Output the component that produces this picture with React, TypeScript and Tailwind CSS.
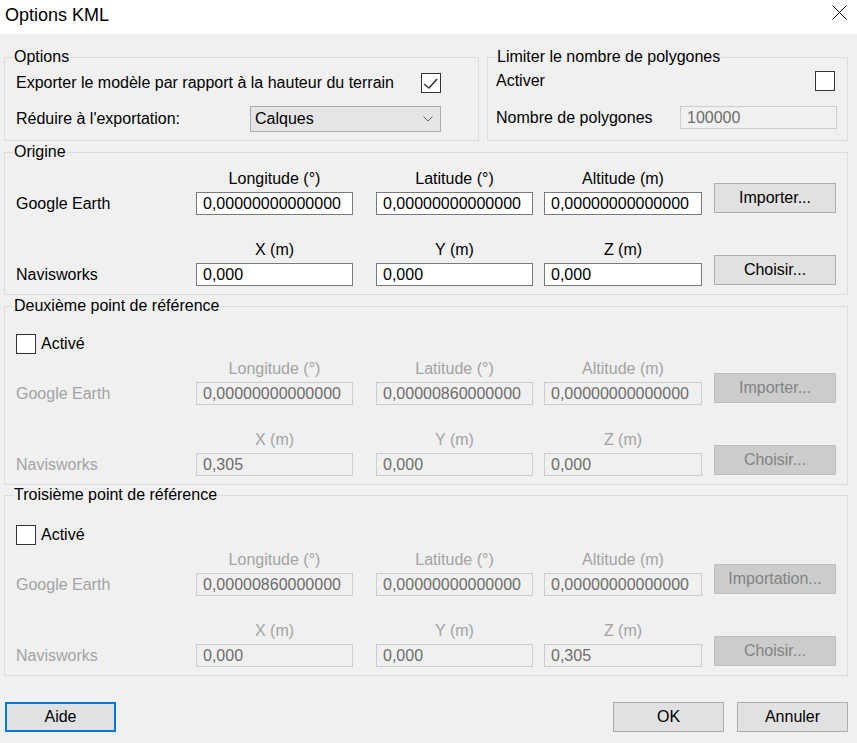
import React from 'react';

type Coord = {
  google: string[];
  navis: string[];
  importLabel: string;
};

const GOOGLE_HEADERS = ['Longitude (°)', 'Latitude (°)', 'Altitude (m)'];
const NAVIS_HEADERS = ['X (m)', 'Y (m)', 'Z (m)'];
const FIELD_LAYOUT = [
  { w: 'w-[157px]', ml: '' },
  { w: 'w-[157px]', ml: 'ml-[23px]' },
  { w: 'w-[158px]', ml: 'ml-[11px]' },
];

function Checkbox({ checked = false }: { checked?: boolean }) {
  return (
    <span className="w-[20px] h-[20px] border border-[#333333] bg-white flex items-center justify-center shrink-0">
      {checked && (
        <svg width="18" height="18" viewBox="0 0 18 18">
          <polyline points="2,10 7,14 15,5" fill="none" stroke="#333333" strokeWidth="1.6" />
        </svg>
      )}
    </span>
  );
}

function Group({ title, className, children }: { title: string; className: string; children: React.ReactNode }) {
  return (
    <fieldset className={`border border-[#dcdcdc] min-w-0 ${className}`}>
      <legend className="ml-[8px] px-[1px] leading-[20px]">{title}</legend>
      {children}
    </fieldset>
  );
}

function Button({ label, disabled, className }: { label: string; disabled?: boolean; className: string }) {
  return (
    <div
      className={`w-[122px] h-[30px] border flex items-center justify-center ${
        disabled ? 'bg-[#cccccc] border-[#bfbfbf] text-[#838383]' : 'bg-[#e1e1e1] border-[#adadad] text-black'
      } ${className}`}
    >
      {label}
    </div>
  );
}

function CoordRow({
  label,
  headers,
  values,
  button,
  buttonMb,
  disabled,
}: {
  label: string;
  headers: string[];
  values: string[];
  button: string;
  buttonMb: string;
  disabled?: boolean;
}) {
  return (
    <div className="flex items-end">
      <div className={`w-[180px] h-[23px] flex items-center ${disabled ? 'text-[#a3a3a3]' : 'text-black'}`}>{label}</div>
      {FIELD_LAYOUT.map((f, i) => (
        <div key={i} className={`flex flex-col ${f.w} ${f.ml}`}>
          <div className={`h-[20px] leading-[20px] text-center whitespace-nowrap ${disabled ? 'text-[#a3a3a3]' : 'text-black'}`}>
            {headers[i]}
          </div>
          <div
            className={`mt-[3px] h-[23px] border flex items-center pl-[6px] ${
              disabled ? 'border-[#cccccc] bg-[#f0f0f0] text-[#6d6d6d]' : 'border-[#7a7a7a] bg-white text-black'
            }`}
          >
            {values[i]}
          </div>
        </div>
      ))}
      <Button label={button} disabled={disabled} className={`ml-[12px] ${buttonMb}`} />
    </div>
  );
}

function CoordBlock({ data, disabled }: { data: Coord; disabled?: boolean }) {
  return (
    <>
      <CoordRow
        label="Google Earth"
        headers={GOOGLE_HEADERS}
        values={data.google}
        button={data.importLabel}
        buttonMb="mb-[2px]"
        disabled={disabled}
      />
      <div className="mt-[25px]">
        <CoordRow
          label="Navisworks"
          headers={NAVIS_HEADERS}
          values={data.navis}
          button="Choisir..."
          buttonMb="mb-[1px]"
          disabled={disabled}
        />
      </div>
    </>
  );
}

const ORIGIN: Coord = {
  google: ['0,00000000000000', '0,00000000000000', '0,00000000000000'],
  navis: ['0,000', '0,000', '0,000'],
  importLabel: 'Importer...',
};
const SECOND: Coord = {
  google: ['0,00000000000000', '0,00000860000000', '0,00000000000000'],
  navis: ['0,305', '0,000', '0,000'],
  importLabel: 'Importer...',
};
const THIRD: Coord = {
  google: ['0,00000860000000', '0,00000000000000', '0,00000000000000'],
  navis: ['0,000', '0,000', '0,305'],
  importLabel: 'Importation...',
};

export default function App() {
  return (
    <div className="w-[857px] h-[743px] overflow-hidden bg-[#f0f0f0] text-[16px] text-black font-['Liberation_Sans',Arial,sans-serif]">
      {/* Title bar */}
      <div className="h-[34px] bg-white flex items-start">
        <div className="pl-[5px] pt-[4px] text-[18px] leading-[22px]">Options KML</div>
        <svg className="ml-auto mr-[10px] mt-[5px]" width="15" height="15" viewBox="0 0 15 15">
          <path d="M0.5 0.5 L14.5 14.5 M14.5 0.5 L0.5 14.5" stroke="#000" strokeWidth="1" />
        </svg>
      </div>

      {/* Options + Limiter */}
      <div className="flex mt-[13px] ml-[4px] gap-[8px]">
        <Group title="Options" className="w-[475px]">
          <div className="pt-[6px] pb-[8px] pl-[11px] pr-[37px]">
            <div className="h-[20px] flex items-center">
              <span>Exporter le modèle par rapport à la hauteur du terrain</span>
              <span className="ml-auto">
                <Checkbox checked />
              </span>
            </div>
            <div className="mt-[13px] h-[26px] flex items-center">
              <span>Réduire à l'exportation:</span>
              <div className="ml-auto w-[191px] h-[26px] bg-[#e5e5e5] border border-[#acacac] flex items-center pl-[4px]">
                <span>Calques</span>
                <svg className="ml-auto mr-[7px]" width="10" height="6" viewBox="0 0 10 6">
                  <polyline points="0.5,0.5 5,5 9.5,0.5" fill="none" stroke="#606060" strokeWidth="1" />
                </svg>
              </div>
            </div>
          </div>
        </Group>
        <Group title="Limiter le nombre de polygones" className="w-[361px]">
          <div className="pt-[4px] pl-[8px] pr-[10px]">
            <div className="h-[20px] flex items-center">
              <span>Activer</span>
              <span className="ml-auto mr-[2px]">
                <Checkbox />
              </span>
            </div>
            <div className="mt-[15px] h-[23px] flex items-center">
              <span>Nombre de polygones</span>
              <div className="ml-auto w-[157px] h-[23px] border border-[#cccccc] bg-[#f0f0f0] text-[#6d6d6d] flex items-center pl-[6px]">
                100000
              </div>
            </div>
          </div>
        </Group>
      </div>

      {/* Origine */}
      <Group title="Origine" className="ml-[4px] mt-[1px] w-[844px]">
        <div className="pt-[7px] pb-[8px] pl-[11px]">
          <CoordBlock data={ORIGIN} />
        </div>
      </Group>

      {/* Deuxième point */}
      <Group title="Deuxième point de référence" className="ml-[4px] mt-[1px] w-[844px]">
        <div className="pt-[18px] pb-[8px] pl-[11px]">
          <div className="h-[20px] flex items-center gap-[5px]">
            <Checkbox />
            <span>Activé</span>
          </div>
          <div className="mt-[5px]">
            <CoordBlock data={SECOND} disabled />
          </div>
        </div>
      </Group>

      {/* Troisième point */}
      <Group title="Troisième point de référence" className="ml-[4px] w-[844px]">
        <div className="pt-[20px] pb-[8px] pl-[11px]">
          <div className="h-[20px] flex items-center gap-[5px]">
            <Checkbox />
            <span>Activé</span>
          </div>
          <div className="mt-[5px]">
            <CoordBlock data={THIRD} disabled />
          </div>
        </div>
      </Group>

      {/* Footer buttons */}
      <div className="mt-[26px] flex pl-[5px] pr-[9px]">
        <div className="w-[111px] h-[30px] border-2 border-[#0078d7] bg-[#e1e1e1] flex items-center justify-center">Aide</div>
        <div className="ml-auto w-[111px] h-[30px] border border-[#adadad] bg-[#e1e1e1] flex items-center justify-center">OK</div>
        <div className="ml-[13px] w-[111px] h-[30px] border border-[#adadad] bg-[#e1e1e1] flex items-center justify-center">Annuler</div>
      </div>
    </div>
  );
}
